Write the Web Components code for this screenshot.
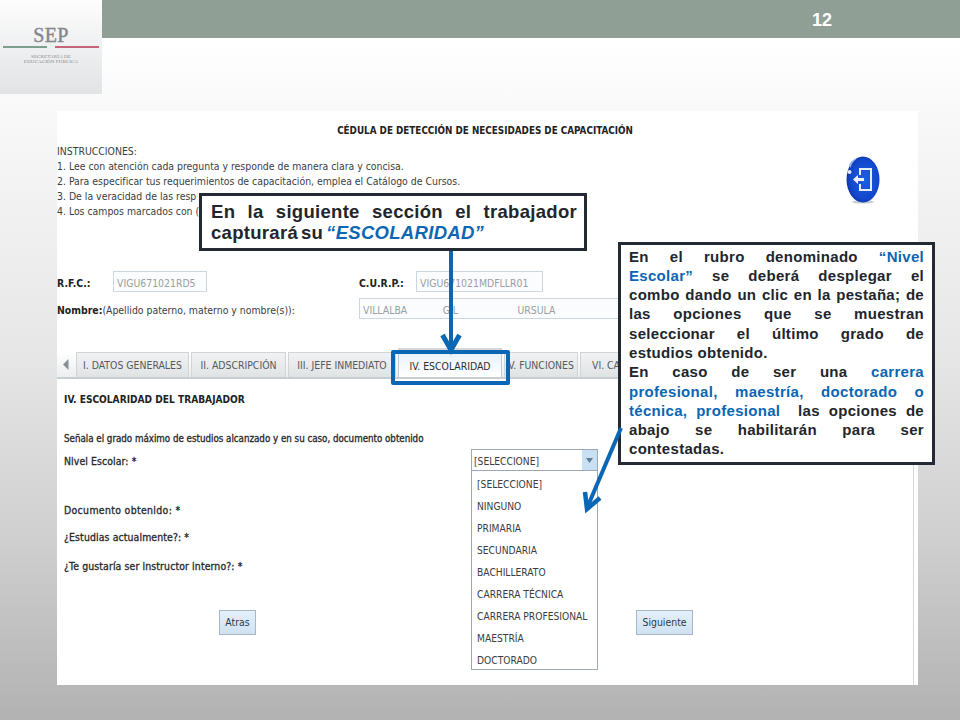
<!DOCTYPE html>
<html lang="es"><head><meta charset="utf-8"><title>Escolaridad</title>
<style>html,body{margin:0;padding:0}body{width:960px;height:720px;overflow:hidden}</style>
</head><body>
<sep-slide>
  <sep-header slot="header" page="12"></sep-header>
  <form-shot slot="shot"></form-shot>
  <call-out style="left:199px;top:193px;width:388px;height:58px;letter-spacing:.3px" pad="5px 7px 0 9px" size="18.5px" lh="21px">
    <div class="j">En la siguiente sección el trabajador</div>
    <div style="word-spacing:-2.500px">capturará su <blue-text><i>“ESCOLARIDAD”</i></blue-text></div>
  </call-out>
  <call-out style="left:618px;top:242px;width:317px;height:223px;letter-spacing:.3px" pad="1.500px 8px 0 8px" size="15px" lh="19.3px">
    <div class="j">En el rubro denominado <blue-text>“Nivel</blue-text></div>
    <div class="j"><blue-text>Escolar”</blue-text> se deberá desplegar el</div>
    <div class="j">combo dando un clic en la pestaña; de</div>
    <div class="j">las opciones que se muestran</div>
    <div class="j">seleccionar el último grado de</div>
    <div>estudios obtenido.</div>
    <div class="j">En caso de ser una <blue-text>carrera</blue-text></div>
    <div class="j"><blue-text>profesional, maestría, doctorado o</blue-text></div>
    <div class="j"><blue-text>técnica, profesional</blue-text>&nbsp; las opciones de</div>
    <div class="j">abajo se habilitarán para ser</div>
    <div>contestadas.</div>
  </call-out>
  <arrow-layer></arrow-layer>
</sep-slide>
<script>
function def(name, html){
  customElements.define(name, class extends HTMLElement{
    connectedCallback(){
      if(this.shadowRoot) return;
      const r=this.attachShadow({mode:'open'});
      r.innerHTML=typeof html==='function'?html(this):html;
    }
  });
}
def('blue-text',`<style>:host{display:inline;color:#0b66b3}</style><slot></slot>`);
def('sep-slide',`<style>
:host{display:block;position:relative;width:960px;height:720px;overflow:hidden;
background:linear-gradient(180deg,#fff 0,#fff 6%,#f7f7f7 18%,#e6e6e6 50%,#cfcfcf 75%,#b2b2b2 100%);font-family:"Liberation Sans",Arial,sans-serif}
.stack{display:flex;flex-direction:column}
.shot{padding:17px 0 0 57px}
</style><div class="stack"><slot name="header"></slot><div class="shot"><slot name="shot"></slot></div></div><slot></slot>`);

def('sep-header',h=>`<style>
:host{display:flex;height:94px;align-items:flex-start}
.logo{width:102px;height:94px;flex:none;background:linear-gradient(180deg,#fdfdfd 0,#e1e3e5 100%);display:flex;flex-direction:column;align-items:center;padding-top:24px;box-sizing:border-box}
.sep{font:400 20px/22px "Liberation Serif",serif;letter-spacing:.3px;color:#85868a;-webkit-text-stroke:.4px #85868a}
.rule{display:flex;gap:8px;width:96px;margin-top:0;height:2px}
.rule i{flex:1;display:block}
.g{background:#7d9f8b}.r{background:#c4657a}
.sub{font:400 5px/5px "Liberation Serif",serif;letter-spacing:.15px;color:#85878b;text-align:center;margin-top:6px}
.bar{flex:1;height:38px;box-sizing:border-box;padding:2px 128px 0 0;background:#8f9f95;display:flex;align-items:center;justify-content:flex-end;color:#fff;font:700 18px "Liberation Sans",Arial,sans-serif}
</style>
<div class="logo"><div class="sep">SEP</div><div class="rule"><i class="g"></i><i class="r"></i></div><div class="sub">SECRETARÍA DE<br>EDUCACIÓN PÚBLICA</div></div>
<div class="bar"><span>${h.getAttribute('page')}</span></div>`);

def('call-out',h=>`<style>
:host{display:block;position:absolute;box-sizing:border-box;background:#fff;border:3px solid #232a33;padding:${h.getAttribute('pad')};
font:700 ${h.getAttribute('size')}/${h.getAttribute('lh')} "Liberation Sans",Arial,sans-serif;color:#22262c}
::slotted(.j){text-align:justify;text-align-last:justify}
::slotted(div){white-space:nowrap}
</style><slot></slot>`);

def('form-tab',h=>`<style>
:host{display:block;box-sizing:border-box;height:25px;width:${h.getAttribute('w')}px;padding:0 ${h.getAttribute('pl')||'0'}px;text-align:${h.getAttribute('pl')?'left':'center'};line-height:25px;background:linear-gradient(#f1f2f3,#e0e3e4);border:1px solid #d2d5d7;border-bottom:0;color:#55595d;white-space:nowrap;overflow:hidden;flex:none}
:host([active]){background:linear-gradient(#e6f1fa,#fff);color:#2b2e32;border-color:#c2c8cc;border-top:3px solid #d4d8db;margin-top:-4px;height:29px;line-height:30px}
</style><slot></slot>`);

def('form-input',h=>`<style>
:host{display:block;box-sizing:border-box;height:21px;border:1px solid #ccd7e0;background:#fbfcfd;color:#9a9ea1;line-height:22px;padding-left:3px;white-space:pre;overflow:hidden}
</style><slot></slot>`);

def('form-btn',`<style>
:host{display:flex;align-items:center;justify-content:center;box-sizing:border-box;height:25px;border:1px solid #a6b8c6;background:linear-gradient(#e4f0fa,#cfe2f3);color:#2b3a46}
</style><slot></slot>`);

def('combo-box',`<style>
:host{display:block;box-sizing:border-box;width:127px;height:221px;background:#fff;border:1px solid #9aa9b3;color:#3a3d40;font-size:10.2px}
.head{display:flex;height:21px;border-bottom:1px solid #9aa9b3;box-sizing:border-box;align-items:center;padding-left:2px;justify-content:space-between}
.head>span:first-child{padding-top:2px}
.btn{width:15px;height:20px;background:#c9dff2;display:flex;align-items:center;justify-content:center}
.list{display:grid;grid-auto-rows:22px;padding:2px 0 0 5px;align-items:center}
</style><div class="head"><span>[SELECCIONE]</span><span class="btn"><svg width="7" height="5" viewBox="0 0 7 5"><path d="M0 0h7L3.5 5z" fill="#5d7f9c"/></svg></span></div>
<div class="list"><span>[SELECCIONE]</span><span>NINGUNO</span><span>PRIMARIA</span><span>SECUNDARIA</span><span>BACHILLERATO</span><span>CARRERA TÉCNICA</span><span>CARRERA PROFESIONAL</span><span>MAESTRÍA</span><span>DOCTORADO</span></div>`);

def('exit-icon',`<style>:host{display:block;width:34px;height:48px}</style>
<svg width="34" height="48" viewBox="0 0 34 48"><defs><radialGradient id="b" cx=".55" cy=".5" r=".62"><stop offset="0" stop-color="#1f5fe6"/><stop offset=".7" stop-color="#1247cc"/><stop offset="1" stop-color="#0a2b8a"/></radialGradient></defs>
<ellipse cx="17" cy="46" rx="11" ry="1.600" fill="#c9ccd0"/>
<ellipse cx="17" cy="23.500" rx="16.500" ry="23" fill="url(#b)"/>
<path d="M3 9Q6 3 11 2.500Q6 6 4.500 12z" fill="#8fb0f2"/>
<circle cx="3.500" cy="16" r="2" fill="#dfe9fb"/>
<path d="M14 19v-6h11v21H14v-6" fill="none" stroke="#e6eefc" stroke-width="2"/>
<path d="M7 23.500l5-4.500v3h6v3h-6v3z" fill="#eef3fd"/></svg>`);

def('form-shot',`<style>
:host{display:block;box-sizing:border-box;width:861px;height:574px;background:linear-gradient(#d6d6d6,#d6d6d6) 856px 240px/1px 100% no-repeat,#fff;font:10.4px/15px "DejaVu Sans Condensed","DejaVu Sans",sans-serif;font-stretch:condensed;color:#3a3e42}
.title{font-weight:700;font-size:9.8px;text-align:center;color:#222;margin-left:-5px;padding-top:12px}
.top{display:flex;justify-content:space-between;padding-right:38px}
.ins{padding-top:6px;white-space:nowrap}
exit-icon{margin-top:18px}
.ids{display:grid;grid-template-columns:56px 94px 152px 57px 127px 1fr;align-items:center;row-gap:6px;margin-top:52px;height:48px}
b{font-weight:700;color:#222;padding-top:3px}
.name{grid-column:1/4;padding-top:3px}
.nameinp{grid-column:4/7;width:262px}
.tabs{display:flex;gap:2px;margin-top:33px;height:25px;border-bottom:2px solid #c9cdd0;background:linear-gradient(#fff,#eceeef)}
.prev{width:17px;display:flex;align-items:center;justify-content:center;flex:none}
.body{padding:13px 0 0 7px;position:relative}
.h{font-weight:700;font-size:10.100px;color:#222}
.q{color:#26292c;-webkit-text-stroke:.3px #26292c}
.actions{display:grid;grid-template-columns:37px 1fr 57px;padding:0 225px 0 162px;margin-top:36px}
combo-box{position:absolute;left:414px;top:70px}
</style>
<div class="title">CÉDULA DE DETECCIÓN DE NECESIDADES DE CAPACITACIÓN</div>
<div class="top"><div class="ins">INSTRUCCIONES:<br>1. Lee con atención cada pregunta y responde de manera clara y concisa.<br>2. Para especificar tus requerimientos de capacitación, emplea el Catálogo de Cursos.<br>3. De la veracidad de las resp<br>4. Los campos marcados con (</div><exit-icon></exit-icon></div>
<div class="ids">
<b>R.F.C.:</b><form-input>VIGU671021RD5</form-input><span></span><b>C.U.R.P.:</b><form-input>VIGU671021MDFLLR01</form-input><span></span>
<span class="name"><b>Nombre:</b>(Apellido paterno, materno y nombre(s)):</span><form-input class="nameinp">VILLALBA            GIL                    URSULA</form-input>
</div>
<div class="tabs"><span class="prev"><svg width="6" height="11" viewBox="0 0 6 11"><path d="M5.500 0v11L0 5.500z" fill="#8a9094"/></svg></span><form-tab w="113">I. DATOS GENERALES</form-tab><form-tab w="95">II. ADSCRIPCIÓN</form-tab><form-tab w="108">III. JEFE INMEDIATO</form-tab><form-tab w="104" active>IV. ESCOLARIDAD</form-tab><form-tab w="74">V. FUNCIONES</form-tab><form-tab w="40" pl="11">VI. CA</form-tab></div>
<div class="body">
<div class="h">IV. ESCOLARIDAD DEL TRABAJADOR</div>
<div class="q" style="margin-top:24px;font-size:9.700px">Señala el grado máximo de estudios alcanzado y en su caso, documento obtenido</div>
<div class="q" style="margin-top:8px;letter-spacing:.1px">Nivel Escolar: *</div>
<div class="q" style="margin-top:34px;letter-spacing:.35px">Documento obtenido: *</div>
<div class="q" style="margin-top:12px;letter-spacing:.12px">¿Estudias actualmente?: *</div>
<div class="q" style="margin-top:14px;letter-spacing:.13px">¿Te gustaría ser instructor interno?: *</div>
<combo-box></combo-box>
</div>
<div class="actions"><form-btn>Atras</form-btn><span></span><form-btn>Siguiente</form-btn></div>`);

def('arrow-layer',`<style>:host{position:absolute;inset:0;display:block;pointer-events:none}
.hl{position:absolute;left:391px;top:350px;width:119px;height:35px;box-sizing:border-box;border:4px solid #0b66b3;border-radius:2px}</style>
<svg width="960" height="720" viewBox="0 0 960 720" style="position:absolute;inset:0" fill="none" stroke="#0b66b3" stroke-width="4">
<path d="M451 251V349"/><path d="M442.500 335L451 350L459.500 335" stroke-width="5"/>
<path d="M621 428L587 508"/><path d="M585 492L587 509L600 498" stroke-width="4.500"/></svg><div class="hl"></div>`);
</script>
</body></html>
